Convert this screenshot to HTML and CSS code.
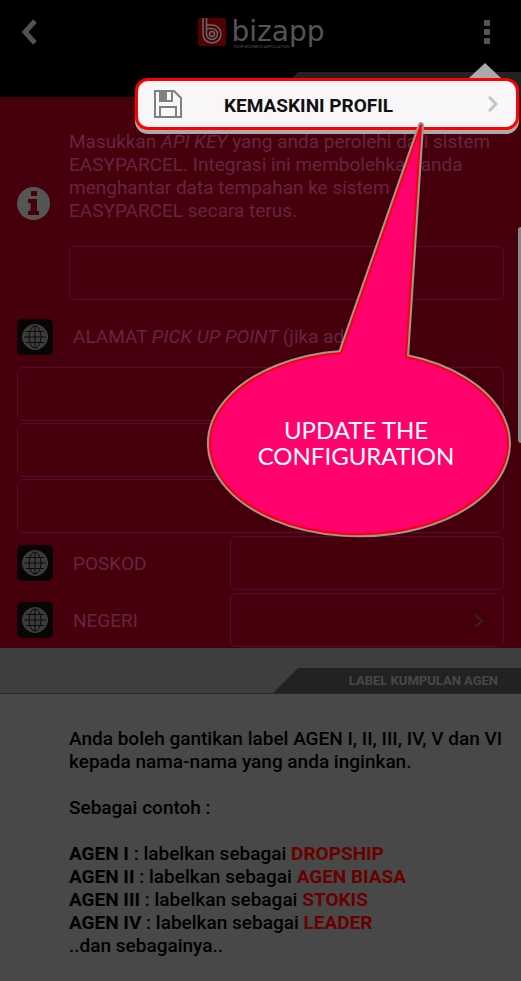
FILE: index.html
```html
<!DOCTYPE html>
<html lang="ms">
<head>
<meta charset="UTF-8">
<meta name="viewport" content="width=device-width, initial-scale=1">
<title>Bizapp - Profil</title>
<link rel="stylesheet" href="styles.css">
</head>
<body>
<!-- icon yang dikongsi -->
<svg class="sprite" aria-hidden="true">
	<symbol id="globe" viewBox="0 0 36 36">
		<rect width="36" height="36" rx="5" fill="#0a0505"/>
		<circle cx="18" cy="18" r="12" fill="#3c3c3c"/>
		<g fill="none" stroke="#0a0a0a">
			<path d="M18 7V29M7 18H29M9 12.500H27M9 23.500H27"/>
			<ellipse cx="18" cy="18" rx="6" ry="11"/>
		</g>
		<circle cx="18" cy="18" r="12.500" fill="none" stroke="#484848"/>
	</symbol>
</svg>
<header class="topbar">
	<button class="btn-back" type="button" aria-label="Kembali">
		<svg width="20" height="28" viewBox="0 0 20 28"><path d="M16 3L6 14L16 25" fill="none" stroke="#525252" stroke-width="5"/></svg>
	</button>
	<div class="logo">
		<svg width="29" height="30" viewBox="0 0 29 30">
			<rect y="1" width="28" height="28" rx="3" fill="#500000"/>
			<g fill="none" stroke="#666" stroke-width="1.5">
				<path d="M5 1V17A9 9 0 1 0 14 8H8.500V1"/>
				<path d="M8.500 8V17A5.500 5.500 0 1 0 14 11.500H8.500"/>
				<circle cx="14" cy="17" r="2.500"/>
			</g>
		</svg>
		<div class="logo-text">
			<span class="logo-name">bizapp</span>
			<span class="logo-tag">YOUR BUSINESS APPLICATION</span>
		</div>
	</div>
	<button class="btn-more" type="button" aria-label="Menu">
		<svg width="8" height="26" viewBox="0 0 8 26" fill="#555"><rect x="1" y="1" width="6" height="6" rx="1"/><rect x="1" y="10" width="6" height="6" rx="1"/><rect x="1" y="19" width="6" height="6" rx="1"/></svg>
	</button>
</header>
<div class="divider divider-top"><span class="tab"></span></div>
<main>
	<form class="parcel">
		<div class="info">
			<svg width="33" height="35" viewBox="0 0 33 35">
				<circle cx="16.500" cy="16.500" r="16.500" fill="#555"/>
				<path d="M14 4H20V9H14ZM11 12H20V24H22V28H11V24H13.500V16H11Z" fill="#46000b"/>
			</svg>
			<label for="api-key">Masukkan <i>API KEY</i> yang anda perolehi dari sistem<br>EASYPARCEL. Integrasi ini membolehkan anda<br>menghantar data tempahan ke sistem<br>EASYPARCEL secara terus.</label>
			<input type="text" id="api-key">
		</div>
		<div class="row row-title">
			<svg class="icon"><use href="#globe"/></svg>
			<label for="alamat-1">ALAMAT <i>PICK UP POINT</i> (jika ada)</label>
		</div>
		<div class="address">
			<input type="text" id="alamat-1">
			<input type="text" aria-label="Alamat 2">
			<input type="text" aria-label="Alamat 3">
		</div>
		<div class="row">
			<svg class="icon"><use href="#globe"/></svg>
			<label for="poskod">POSKOD</label>
			<input type="text" id="poskod">
		</div>
		<div class="row">
			<svg class="icon"><use href="#globe"/></svg>
			<label for="negeri">NEGERI</label>
			<div class="select">
				<select id="negeri"><option></option></select>
				<svg class="arrow" width="10" height="16" viewBox="0 0 10 16"><path d="M1 2L8 8L1 14" fill="none" stroke="#32202a" stroke-width="2"/></svg>
			</div>
		</div>
	</form>
	<div class="divider"><h2 class="tab">LABEL KUMPULAN AGEN</h2></div>
	<section class="agen">
		<p>Anda boleh gantikan label AGEN I, II, III, IV, V dan VI<br>kepada nama-nama yang anda inginkan.</p>
		<p>Sebagai contoh :</p>
		<p>
			<b>AGEN I</b> : labelkan sebagai <b class="red">DROPSHIP</b><br>
			<b>AGEN II</b> : labelkan sebagai <b class="red">AGEN BIASA</b><br>
			<b>AGEN III</b> : labelkan sebagai <b class="red">STOKIS</b><br>
			<b>AGEN IV</b> : labelkan sebagai <b class="red">LEADER</b><br>
			..dan sebagainya..
		</p>
	</section>
</main>
<!-- menu -->
<div class="menu">
	<button class="menu-item" type="button">
		<svg width="28" height="28" viewBox="0 0 28 28" fill="none" stroke="#808080" stroke-width="2">
			<path d="M1 1H20L27 8V27H1Z"/>
			<path d="M6 1V11H18V1M6 27V17H22V27"/>
			<path d="M7 1H13V10H7Z" fill="#808080" stroke="none"/>
		</svg>
		<span>KEMASKINI PROFIL</span>
		<svg width="10" height="16" viewBox="0 0 10 16"><path d="M1 1L8 8L1 15" fill="none" stroke="#c4c4c4" stroke-width="3"/></svg>
	</button>
</div>
<!-- belon penerangan -->
<div class="balloon">
	<svg width="306" height="420" viewBox="0 0 306 420">
		<g fill="#ff026e" stroke-linejoin="round">
			<path d="M138 233L218 5L203 237A149 91 0 1 1 138 233Z" stroke="#999" stroke-width="6"/>
			<path d="M138 233L218 5L203 237A149 91 0 1 1 138 233Z" stroke="#ff0000" stroke-width="2"/>
		</g>
	</svg>
	<p>UPDATE THE<br>CONFIGURATION</p>
</div>
<div class="scrollbar"></div>
</body>
</html>
```

FILE: styles.css
```css
*{
	margin:0;
	padding:0;
	box-sizing:border-box;
}
body{
	position:relative;
	min-height:100vh;
	overflow-x:hidden;
	background:#484848;
	color:#000;
	font-family:Roboto,"Liberation Sans",sans-serif;
	font-size:19px;
	line-height:23px;
}
button{
	border:0;
	background:none;
}
svg{
	display:block;
	flex:none;
}
.sprite{
	position:absolute;
	width:0;
	height:0;
}
/* bahagian atas */
.topbar{
	display:flex;
	justify-content:space-between;
	align-items:center;
	height:72px;
	padding:0 30px 8px 19px;
	background:#000;
}
.logo{
	display:flex;
	align-items:center;
	gap:5px;
}
.logo-text{
	position:relative;
	color:#555;
}
.logo-name{
	display:block;
	font-family:"DejaVu Sans",sans-serif;
	font-size:28px;
	line-height:30px;
}
.logo-tag{
	position:absolute;
	left:2px;
	top:27px;
	font-size:4px;
	line-height:5px;
	white-space:nowrap;
}
/* garisan dengan tab senget */
.divider{
	display:flex;
	justify-content:flex-end;
	align-items:flex-end;
	height:46px;
	background:#3d3e3e;
	border-bottom:1px solid #292929;
}
.divider-top{
	height:25px;
	background:#000;
	border:0;
}
.tab{
	width:248px;
	height:25px;
	padding-right:23px;
	background:#222;
	clip-path:polygon(25px 0,100% 0,100% 100%,0 100%);
	color:#484848;
	font-size:13px;
	font-weight:700;
	line-height:26px;
	text-align:right;
}
/* borang */
.parcel{
	padding:33px 17px 1px;
	background:#46000b;
	color:#632640;
}
input,
select{
	display:block;
	width:100%;
	height:54px;
	padding:0 12px;
	border:1px solid #560a35;
	border-radius:6px;
	outline:0;
	background:none;
	color:#632640;
	font:inherit;
	appearance:none;
}
.info{
	display:grid;
	grid-template-columns:33px 1fr;
	column-gap:19px;
	row-gap:24px;
	align-items:end;
}
.info label{
	white-space:nowrap;
}
.info input{
	grid-column:2;
}
.address{
	display:grid;
	gap:2px;
}
.row{
	display:grid;
	grid-template-columns:36px 137px 1fr;
	column-gap:20px;
	align-items:center;
	margin-top:3px;
}
.row-title{
	grid-template-columns:36px 1fr;
	height:67px;
	margin:0;
	padding-top:6px;
}
.icon{
	width:36px;
	height:36px;
}
.select{
	position:relative;
}
.arrow{
	position:absolute;
	right:20px;
	top:20px;
	pointer-events:none;
}
.agen{
	padding:33px 0 24px 69px;
	font-weight:500;
}
.agen p + p{
	margin-top:23px;
}
.red{
	color:#680000;
}
/* menu terapung */
.menu{
	position:absolute;
	left:135px;
	right:2px;
	top:78px;
}
.menu:before{
	content:'';
	position:absolute;
	right:18px;
	bottom:100%;
	border:16px solid transparent;
	border-top:0;
	border-bottom:15px solid #aaa;
}
.menu-item{
	display:flex;
	align-items:center;
	width:100%;
	height:52px;
	padding:0 18px 0 16px;
	border:3px solid #ff0000;
	border-radius:13px;
	background:#f8f6f8;
	box-shadow:0 4px 0 #aaa;
	color:#111;
	font:700 19px/24px Roboto,sans-serif;
}
.menu-item span{
	flex:1;
	padding:4px 0 0 42px;
	text-align:left;
}
/* belon */
.balloon{
	position:absolute;
	right:12px;
	top:120px;
	width:306px;
}
.balloon svg{
	overflow:visible;
}
.balloon p{
	position:absolute;
	left:0;
	right:0;
	top:297px;
	color:#fff;
	font-family:Lato,sans-serif;
	font-size:24px;
	line-height:26px;
	text-align:center;
}
.scrollbar{
	position:absolute;
	right:0;
	top:227px;
	width:3px;
	height:216px;
	border-radius:3px 0 0 3px;
	background:#888;
}
```
